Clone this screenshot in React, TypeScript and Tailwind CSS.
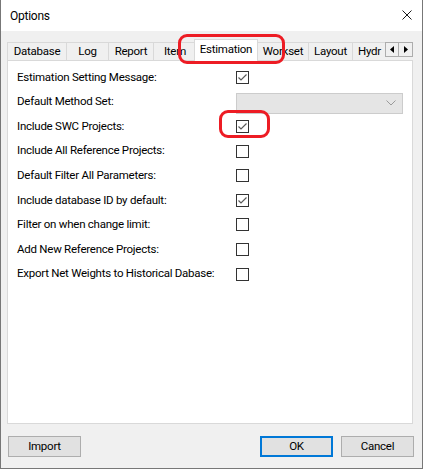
import React from "react";

const font = { fontFamily: 'Roboto, "Noto Sans", sans-serif' };

function Check({ checked }: { checked: boolean }) {
  return (
    <div className="w-[13px] h-[13px] border border-[#333333] bg-white flex items-center justify-center">
      {checked && (
        <svg width="11" height="11" viewBox="0 0 11 11">
          <path d="M1.5 5.5 L4 8 L9.5 2.5" fill="none" stroke="#5a5a5a" strokeWidth="1.2" />
        </svg>
      )}
    </div>
  );
}

const rows: { label: string; kind: "check" | "select"; checked?: boolean }[] = [
  { label: "Estimation Setting Message:", kind: "check", checked: true },
  { label: "Default Method Set:", kind: "select" },
  { label: "Include SWC Projects:", kind: "check", checked: true },
  { label: "Include All Reference Projects:", kind: "check", checked: false },
  { label: "Default Filter All Parameters:", kind: "check", checked: false },
  { label: "Include database ID by default:", kind: "check", checked: true },
  { label: "Filter on when change limit:", kind: "check", checked: false },
  { label: "Add New Reference Projects:", kind: "check", checked: false },
  { label: "Export Net Weights to Historical Dabase:", kind: "check", checked: false },
];

function Tab({ label, w }: { label: string; w: string }) {
  return (
    <div
      className={`${w} h-[18px] mt-[3px] shrink-0 border-l border-t border-[#d9d9d9] bg-[#f0f0f0] flex items-center justify-center whitespace-nowrap`}
    >
      {label}
    </div>
  );
}

export default function App() {
  return (
    <div
      className="relative w-[423px] h-[469px] bg-[#f0f0f0] border-x border-b border-[#777777] text-[11.5px] tracking-[-0.25px] text-black overflow-hidden"
      style={font}
    >
      {/* Title bar */}
      <div className="h-[31px] bg-white flex items-center justify-between pl-[9px] pr-[10px]">
        <span className="text-[12px] leading-none mt-[1px]">Options</span>
        <svg width="10" height="10" viewBox="0 0 10 10" className="mt-[-1px]">
          <path d="M0.5 0.5 L9.5 9.5 M9.5 0.5 L0.5 9.5" stroke="#1a1a1a" strokeWidth="1" />
        </svg>
      </div>

      {/* Body */}
      <div className="pl-[6px] pr-[9px] pt-[8px]">
        {/* Tab strip */}
        <div className="flex h-[21px] items-start">
          <Tab label="Database" w="w-[59px]" />
          <Tab label="Log" w="w-[42px]" />
          <Tab label="Report" w="w-[45px]" />
          <Tab label="Item" w="w-[43px]" />
          <div className="relative z-10 w-[64px] h-[22px] -mx-[2px] shrink-0 border-l border-t border-r border-[#d9d9d9] bg-white flex items-center justify-center pb-[1px]">
            Estimation
          </div>
          <div className="w-[53px] h-[18px] mt-[3px] shrink-0 border-t border-r border-[#d9d9d9] bg-[#f0f0f0] flex items-center justify-center whitespace-nowrap pl-[2px]">
            Workset
          </div>
          <div className="w-[44px] h-[18px] mt-[3px] shrink-0 border-t border-r border-[#d9d9d9] bg-[#f0f0f0] flex items-center justify-center whitespace-nowrap">
            Layout
          </div>
          <div className="w-[32px] h-[18px] mt-[3px] shrink-0 border-t border-[#d9d9d9] bg-[#f0f0f0] flex items-center pl-[5px] whitespace-nowrap overflow-hidden">
            Hydr
          </div>
          <div className="flex mt-[3px] h-[15px] shrink-0">
            <div className="w-[14px] h-[15px] border border-[#adadad] bg-[#f0f0f0] flex items-center justify-center">
              <svg width="4" height="7" viewBox="0 0 4 7">
                <path d="M4 0 L0 3.5 L4 7 Z" fill="#000" />
              </svg>
            </div>
            <div className="w-[14px] h-[15px] border border-l-0 border-[#adadad] bg-[#f0f0f0] flex items-center justify-center">
              <svg width="4" height="7" viewBox="0 0 4 7">
                <path d="M0 0 L4 3.5 L0 7 Z" fill="#000" />
              </svg>
            </div>
          </div>
        </div>

        {/* Panel */}
        <div className="h-[364px] border border-[#d9d9d9] bg-white pt-[4px] pl-[9px]">
          {rows.map((r) => (
            <div key={r.label} className="flex items-center h-[24.6px]">
              <div className="w-[219px] whitespace-nowrap">{r.label}</div>
              {r.kind === "check" ? (
                <Check checked={!!r.checked} />
              ) : (
                <div className="w-[167px] h-[21px] mt-[3px] border border-[#cccccc] bg-[#e5e5e5] flex items-center justify-end pr-[6px]">
                  <svg width="10" height="6" viewBox="0 0 10 6">
                    <path d="M0.5 0.5 L5 5 L9.5 0.5" fill="none" stroke="#9a9a9a" strokeWidth="1" />
                  </svg>
                </div>
              )}
            </div>
          ))}
        </div>

        {/* Buttons */}
        <div className="flex items-center mt-[12px] ml-[1px] -mr-[1px]">
          <button className="w-[73px] h-[21px] border border-[#adadad] bg-[#e1e1e1] text-[11.5px] tracking-[-0.25px]" style={font}>
            Import
          </button>
          <div className="flex-1" />
          <button className="w-[73px] h-[21px] border-2 border-[#0078d7] bg-[#e1e1e1] text-[11.5px] tracking-[-0.25px]" style={font}>
            OK
          </button>
          <button className="w-[73px] h-[21px] ml-[8px] border border-[#adadad] bg-[#e1e1e1] text-[11.5px] tracking-[-0.25px]" style={font}>
            Cancel
          </button>
        </div>
      </div>

      {/* Red annotations */}
      <div className="absolute left-[177px] top-[34px] w-[107px] h-[30px] border-[3px] border-[#ed1c24] rounded-[9px] z-20 pointer-events-none" />
      <div className="absolute left-[218px] top-[110px] w-[51px] h-[28px] border-[3px] border-[#ed1c24] rounded-[9px] z-20 pointer-events-none" />
    </div>
  );
}
